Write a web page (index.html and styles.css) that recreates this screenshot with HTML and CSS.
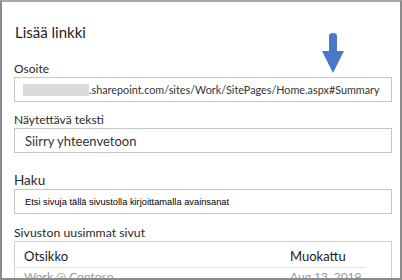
FILE: index.html
```html
<!DOCTYPE html>
<html lang="fi">
  <head>
    <meta charset="UTF-8" />
    <meta name="viewport" content="width=device-width, initial-scale=1.0" />
    <title>Lisää linkki</title>
    <link rel="stylesheet" href="styles.css">
  </head>
  <body>
    <div class="dialog">
      <h3>Lisää linkki</h3>

      <div class="form-group">
        <label class="small">Osoite</label>
        <div class="field">
          <span class="blurred"></span><span>.sharepoint.com/sites/Work/SitePages/Home.aspx#Summary</span>
        </div>
        <!-- nuoli osoittaa ankkuriin -->
        <svg class="arrow" width="24" height="41" viewBox="0 0 24 41">
          <path d="M8 3 Q8 0 12 0 Q16 0 16 3 L16 18 L23 18 L12 40 L1 18 L8 18 Z" fill="#4a78c8" />
        </svg>
      </div>

      <div class="form-group">
        <label class="small">Näytettävä teksti</label>
        <div class="field gap">Siirry yhteenvetoon</div>
      </div>

      <div class="form-group">
        <label class="big">Haku</label>
        <div class="field search">Etsi sivuja tällä sivustolla kirjoittamalla avainsanat</div>
      </div>

      <div class="form-group">
        <label class="mid">Sivuston uusimmat sivut</label>
        <div class="pages">
          <div class="row head">
            <span class="col-title">Otsikko</span>
            <span class="col-date">Muokattu</span>
          </div>
          <div class="row">
            <span class="col-title">Work @ Contoso</span>
            <span class="col-date">Aug 13, 2019</span>
          </div>
        </div>
      </div>
    </div>
  </body>
</html>
```

FILE: styles.css
```css
* {
  margin: 0;
  padding: 0;
  box-sizing: border-box;
}

body {
  font-family: Lato, "Open Sans", sans-serif;
  background-color: #fff;
  color: #222;
}

.dialog {
  width: 402px;
  height: 280px;
  border: 2px solid #8c8c8c;
  border-top-color: #a8a8a8;
  padding: 19px 8px 0 12px;
  overflow: hidden;
  position: relative;
}

.dialog h3 {
  font-size: 15px;
  font-weight: normal;
  line-height: 22px;
  color: #1e1e1e;
  margin-bottom: 19px;
  padding-left: 1px;
}

.form-group {
  position: relative;
}

.form-group label {
  display: block;
  color: #2a2a2a;
}

.form-group label.small {
  font-size: 12px;
  line-height: 14px;
  margin-bottom: 1px;
}

.form-group label.big {
  font-size: 13.5px;
  line-height: 16px;
  margin-bottom: 1px;
}

.form-group label.mid {
  font-size: 12.3px;
  line-height: 15px;
  margin-bottom: 1px;
}

.field {
  height: 25px;
  border: 1px solid #c6c6c6;
  display: flex;
  align-items: center;
  padding-left: 10px;
  font-size: 10.8px;
  color: #333;
  white-space: nowrap;
  overflow: hidden;
  margin-bottom: 11px;
}

.field.gap {
  font-size: 13px;
  margin-bottom: 19px;
}

.field .blurred {
  flex-shrink: 0;
  width: 66px;
  height: 12px;
  background: #dadada;
  margin-left: -2px;
}

.field.search {
  font-family: "Liberation Sans", Arial, sans-serif;
  font-size: 9.3px;
  color: #000;
  margin-bottom: 11px;
}

.arrow {
  position: absolute;
  right: 47px;
  top: -29px;
}

.pages {
  border: 1px solid #d0d0d0;
}

.pages .row {
  display: flex;
  height: 24px;
  align-items: flex-start;
  padding-top: 1px;
  padding-left: 9px;
  font-size: 12px;
  color: #999;
}

.pages .row.head {
  height: 26px;
  align-items: center;
  padding-top: 3px;
  margin-right: 25px;
  border-bottom: 1px solid #e6e6e6;
  font-size: 13px;
  color: #1a1a1a;
}

.pages .col-title {
  width: 266px;
}
```
